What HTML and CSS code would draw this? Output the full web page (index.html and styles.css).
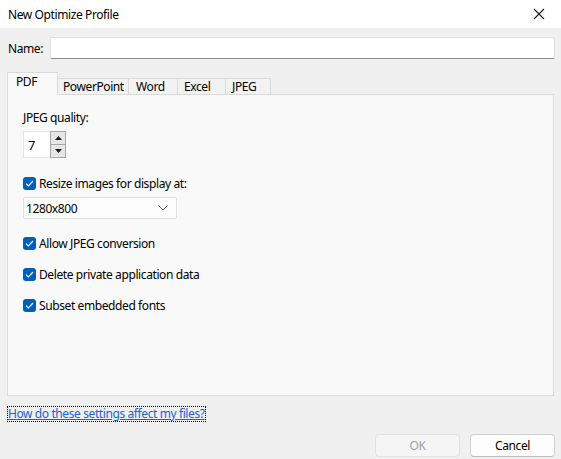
FILE: index.html
```html
<!DOCTYPE html>
<html lang="en">
<head>
  <meta charset="UTF-8" />
  <title>New Optimize Profile</title>
  <link rel="stylesheet" href="styles.css">
</head>
<body>
  <div class="dialog">
    <div class="titlebar">
      <span class="title">New Optimize Profile</span>
      <button class="close" aria-label="Close">
        <svg width="12" height="12" viewBox="0 0 12 12"><path d="M1 1 L11 11 M11 1 L1 11" stroke="#1a1a1a" stroke-width="1.1" fill="none"/></svg>
      </button>
    </div>

    <div class="content">
      <div class="name-row">
        <label for="name">Name:</label>
        <input id="name" type="text">
      </div>

      <div class="tabs">
        <div class="tab active">PDF</div>
        <div class="tab tab-ppt">PowerPoint</div>
        <div class="tab tab-word">Word</div>
        <div class="tab tab-excel">Excel</div>
        <div class="tab tab-jpeg">JPEG</div>
      </div>

      <div class="panel">
        <div class="field-label">JPEG quality:</div>
        <div class="spinner">
          <div class="spin-value">7</div>
          <div class="spin-buttons">
            <div class="spin-btn"><svg width="7" height="4" viewBox="0 0 7 4"><path d="M3.5 0 L7 4 L0 4 Z" fill="#1a1a1a"/></svg></div>
            <div class="spin-btn"><svg width="7" height="4" viewBox="0 0 7 4"><path d="M0 0 L7 0 L3.5 4 Z" fill="#1a1a1a"/></svg></div>
          </div>
        </div>

        <label class="check first">
          <span class="box"><svg width="9" height="7" viewBox="0 0 9 7"><path d="M1 3.6 L3.4 6 L8 1" stroke="#fff" stroke-width="1.2" fill="none"/></svg></span>
          Resize images for display at:
        </label>
        <div class="select">
          <span>1280x800</span>
          <svg width="10" height="6" viewBox="0 0 10 6"><path d="M0.5 0.5 L5 5 L9.5 0.5" stroke="#555" stroke-width="1" fill="none"/></svg>
        </div>

        <label class="check">
          <span class="box"><svg width="9" height="7" viewBox="0 0 9 7"><path d="M1 3.6 L3.4 6 L8 1" stroke="#fff" stroke-width="1.2" fill="none"/></svg></span>
          Allow JPEG conversion
        </label>
        <label class="check">
          <span class="box"><svg width="9" height="7" viewBox="0 0 9 7"><path d="M1 3.6 L3.4 6 L8 1" stroke="#fff" stroke-width="1.2" fill="none"/></svg></span>
          Delete private application data
        </label>
        <label class="check">
          <span class="box"><svg width="9" height="7" viewBox="0 0 9 7"><path d="M1 3.6 L3.4 6 L8 1" stroke="#fff" stroke-width="1.2" fill="none"/></svg></span>
          Subset embedded fonts
        </label>
      </div>

      <div class="help-row">
        <a href="#" class="help">How do these settings affect my files?</a>
      </div>

      <div class="actions">
        <button class="btn" disabled>OK</button>
        <button class="btn">Cancel</button>
      </div>
    </div>
  </div>
</body>
</html>
```

FILE: styles.css
```css
* {
  margin: 0; padding: 0;
  box-sizing: border-box;
}
body {
  width: 561px;
  height: 459px;
  background-color: #f0f0f0;
  font-family: 'Noto Sans', sans-serif;
  font-size: 12px;
  letter-spacing: -0.4px;
  color: #000;
  overflow: hidden;
}

.titlebar {
  height: 28px;
  background-color: #fff;
  display: flex;
  align-items: center;
  justify-content: space-between;
  padding-left: 8px;
}
.close {
  width: 46px;
  height: 28px;
  border: none;
  background: none;
  display: flex;
  align-items: center;
  justify-content: center;
  padding-left: 2px;
}

.content {
  padding: 9px 6px 0 7px;
}

.name-row {
  display: flex;
  align-items: center;
  height: 22px;
}
.name-row label {
  width: 43px;
  padding-left: 1px;
}
.name-row input {
  flex: 1;
  height: 22px;
  border: 1px solid #e2e2e2;
  border-bottom-color: #8a8a8a;
  border-radius: 2px;
  background-color: #fff;
  outline: none;
}

.tabs {
  display: flex;
  align-items: flex-end;
  margin-top: 13px;
  height: 22px;
  position: relative;
  z-index: 1;
}
.tab {
  height: 16px;
  padding-left: 6px;
  border: 1px solid #dadada;
  border-bottom: none;
  border-left: none;
  background-color: #f2f2f2;
  display: flex;
  align-items: center;
  line-height: 16px;
}
.tab-ppt { width: 71px; padding-left: 5px; }
.tab-word { width: 49px; padding-left: 7px; }
.tab-excel { width: 48px; }
.tab-jpeg { width: 45px; }
.tab.active {
  height: 23px;
  margin-bottom: -1px;
  width: 51px;
  padding: 0 0 5px 8px;
  border-left: 1px solid #dadada;
  background-color: #f9f9f9;
}

.panel {
  height: 302px;
  margin-right: 1px;
  background-color: #f9f9f9;
  border: 1px solid #dadada;
  padding: 15px 15px 0 15px;
}
.field-label {
  line-height: 16px;
}

.spinner {
  display: flex;
  width: 43px;
  height: 27px;
  margin-top: 5px;
  background-color: #fff;
  border: 1px solid #e4e4e4;
}
.spin-value {
  flex: 1;
  padding: 4px 0 0 4px;
  font-size: 13px;
}
.spin-buttons {
  width: 16px;
  display: flex;
  flex-direction: column;
  border: 1px solid #a8a8a8;
  margin: -1px -1px -1px 0;
}
.spin-btn {
  flex: 1;
  display: flex;
  align-items: center;
  justify-content: center;
  background-color: #e6e6e6;
}
.spin-btn:first-child {
  border-bottom: 1px solid #a8a8a8;
}

.check {
  display: flex;
  align-items: center;
  height: 16px;
  margin-top: 16px;
}
.check.first {
  margin-top: 17px;
}
.check + .check {
  margin-top: 15px;
}
.box {
  width: 13px;
  height: 13px;
  border-radius: 3px;
  background-color: #005fb8;
  display: flex;
  align-items: center;
  justify-content: center;
  margin-right: 3px;
}

.select {
  width: 154px;
  height: 22px;
  margin-top: 6px;
  margin-bottom: 16px;
  background-color: #fdfdfd;
  border: 1px solid #e0e0e0;
  border-radius: 2px;
  display: flex;
  align-items: center;
  justify-content: space-between;
  padding: 0 8px 0 2px;
}

.help-row {
  margin-top: 9px;
  height: 15px;
  padding-left: 1px;
}
.help {
  color: #1a62d6;
  outline: 1px dotted #000;
  line-height: 14px;
  display: inline-block;
}

.actions {
  display: flex;
  justify-content: flex-end;
  gap: 10px;
  margin-top: 14px;
}
.btn {
  width: 85px;
  height: 23px;
  font-family: 'Noto Sans', sans-serif;
  font-size: 12px;
  letter-spacing: -0.4px;
  background-color: #fdfdfd;
  border: 1px solid #d0d0d0;
  border-bottom-color: #bdbdbd;
  border-radius: 4px;
  color: #000;
}
.btn:disabled {
  background-color: #f5f5f5;
  border-color: #e2e2e2;
  color: #a0a0a0;
}
```
